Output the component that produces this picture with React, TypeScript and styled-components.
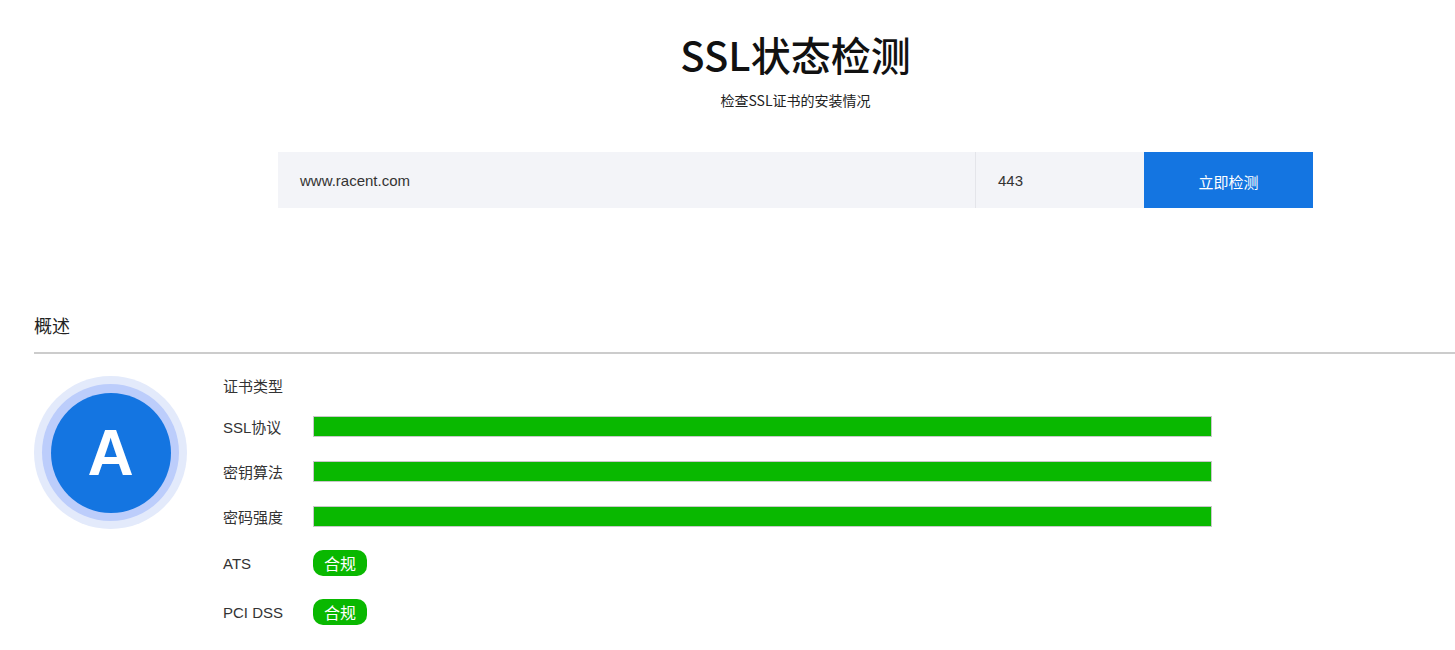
import React from "react";
import styled, { createGlobalStyle } from "styled-components";

const Global = createGlobalStyle`
  body { margin: 0; background: #fff; font-family: "Liberation Sans", "Noto Sans CJK SC", sans-serif; color: #333; }
`;
const Page = styled.div`padding: 0 0 0 34px;`;
const Hero = styled.div`width: 1035px; margin-left: 244px; text-align: center; padding-top: 28px;`;
const Title = styled.h1`margin: 0; font-family: "Noto Sans CJK SC", sans-serif; font-size: 40px; font-weight: 500; color: #111; line-height: 52px;`;
const Sub = styled.div`font-family: "Noto Sans CJK SC", sans-serif; font-size: 14px; color: #222; margin-top: 10px; line-height: 20px;`;
const Bar = styled.div`display: flex; height: 56px; margin-top: 42px; background: #f3f4f8;`;
const Field = styled.div<{ w: number; sep?: boolean }>`
  width: ${p => p.w}px; display: flex; align-items: center; padding-left: ${p => (p.sep ? 22 : 22)}px;
  box-sizing: border-box; font-size: 15px; color: #333; text-align: left;
  ${p => (p.sep ? "border-left: 1px solid #e4e5ea;" : "")}
`;
const Btn = styled.div`width: 169px; background: #1475e1; color: #fff; display: flex; align-items: center; justify-content: center; font-family: "Noto Sans CJK SC", sans-serif; font-size: 15px; padding-top: 2px; box-sizing: border-box;`;
const SecTitle = styled.div`margin-top: 104px; font-family: "Noto Sans CJK SC", sans-serif; font-size: 18px; color: #222; line-height: 26px;`;
const Line = styled.div`height: 2px; background: #cccccc; margin-top: 14px;`;
const Body = styled.div`display: flex; margin-top: 22px;`;
const Grade = styled.div`width: 153px; height: 153px; border-radius: 50%; background: #e3eafb; display: flex; align-items: center; justify-content: center; flex-shrink: 0;`;
const Ring = styled.div`width: 137px; height: 137px; border-radius: 50%; background: #bccdfb; display: flex; align-items: center; justify-content: center;`;
const Core = styled.div`width: 120px; height: 120px; border-radius: 50%; background: #1475e1; color: #fff; font-size: 64px; font-weight: 700; display: flex; align-items: center; justify-content: center;`;
const Rows = styled.div`margin-left: 36px; display: flex; flex-direction: column;`;
const Row = styled.div<{ h: number }>`display: flex; align-items: center; height: ${p => p.h}px;`;
const Label = styled.div`width: 90px; font-size: 15px; color: #333;`;
const Meter = styled.div`width: 899px; height: 21px; box-sizing: border-box; border: 1px solid #c8c8c8; background: #09b800;`;
const Badge = styled.div`width: 54px; height: 26px; border-radius: 10px; background: #09b800; color: #fff; font-size: 16px; display: flex; align-items: center; justify-content: center;`;

export default function App() {
  return (
    <Page>
      <Global />
      <Hero>
        <Title>SSL状态检测</Title>
        <Sub>检查SSL证书的安装情况</Sub>
        <Bar>
          <Field w={697}>www.racent.com</Field>
          <Field w={169} sep>443</Field>
          <Btn>立即检测</Btn>
        </Bar>
      </Hero>
      <SecTitle>概述</SecTitle>
      <Line />
      <Body>
        <Grade><Ring><Core>A</Core></Ring></Grade>
        <Rows>
          <Row h={26} style={{ marginTop: -4 }}><Label>证书类型</Label></Row>
          <Row h={45} style={{ marginTop: 6 }}><Label>SSL协议</Label><Meter /></Row>
          <Row h={45}><Label>密钥算法</Label><Meter /></Row>
          <Row h={45}><Label>密码强度</Label><Meter /></Row>
          <Row h={48}><Label>ATS</Label><Badge>合规</Badge></Row>
          <Row h={50}><Label>PCI DSS</Label><Badge>合规</Badge></Row>
        </Rows>
      </Body>
    </Page>
  );
}
